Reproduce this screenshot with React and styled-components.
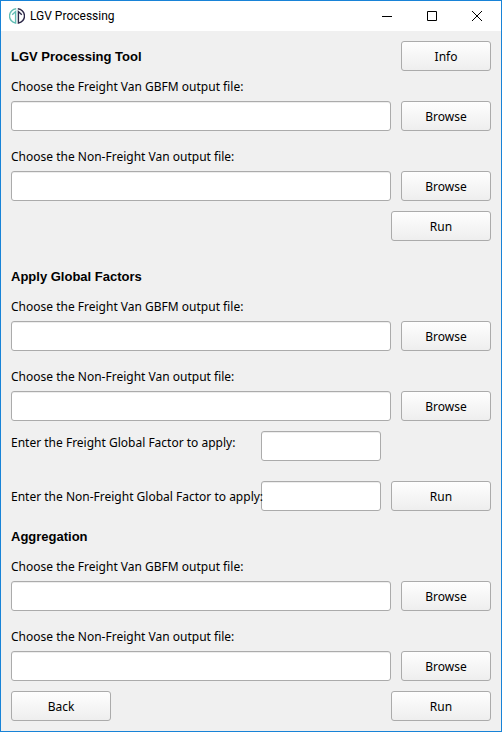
import React, { useId } from "react";
import styled, { createGlobalStyle } from "styled-components";

const GlobalStyle = createGlobalStyle`
  *, *::before, *::after { box-sizing: border-box; }
  body {
    margin: 0;
    background: #f0f0f0;
    color: #000;
    font: 12px/20px "Noto Sans", sans-serif;
  }
`;

const Window = styled.div`
  display: flex;
  flex-direction: column;
  min-height: 100vh;
  border: 1px solid #1883d7;
  background: #f0f0f0;
`;

const TitleBar = styled.header`
  display: flex;
  align-items: center;
  height: 30px;
  padding: 0 2px 0 8px;
  background: #fff;
`;

const Title = styled.h1`
  flex: 1;
  margin: 0;
  padding-left: 5px;
  font: 12px/20px Roboto, sans-serif;
`;

const CaptionButton = styled.button`
  display: grid;
  place-items: center;
  width: 45px;
  height: 30px;
  padding: 0;
  border: 0;
  background: transparent;
`;

const Content = styled.main`
  display: flex;
  flex-direction: column;
  padding: 10px;
`;

const Section = styled.section`
  margin-bottom: ${(p) => p.$gap || 0}px;
`;

const HeadingRow = styled.div`
  display: flex;
  justify-content: space-between;
  height: 30px;
`;

const Heading = styled.h2`
  margin: 0;
  font: bold 13px/32px "Liberation Sans", sans-serif;
`;

const FileGroup = styled.div`
  margin-bottom: 10px;
`;

const FileLabel = styled.label`
  display: block;
  height: 30px;
  line-height: 32px;
`;

const FileRow = styled.div`
  display: flex;
  gap: 10px;
`;

const TextBox = styled.input`
  flex: 1;
  min-width: 0;
  height: 30px;
  padding: 0 6px;
  border: 1px solid #ababab;
  border-radius: 3px;
  background: #fff;
  box-shadow: inset 0 1px 0 #ededed;
  font: inherit;
`;

const Button = styled.button`
  flex: none;
  width: ${(p) => (p.$wide ? 100 : 90)}px;
  height: 30px;
  padding: 2px 0 0;
  border: 1px solid #ababab;
  border-radius: 3px;
  background: linear-gradient(#fefefe, #eeeeee);
  color: #000;
  font: inherit;
`;

const ActionRow = styled.div`
  display: flex;
  justify-content: space-between;
`;

const RunButton = styled(Button)`
  margin-left: auto;
`;

const FactorGrid = styled.div`
  display: grid;
  grid-template-columns: 240px minmax(0, 1fr) 100px;
  column-gap: 10px;
  row-gap: 20px;
`;

const FactorLabel = styled.label`
  z-index: 1;
  padding-top: 2px;
  align-self: ${(p) => p.$align};
  white-space: nowrap;
`;

const FactorBox = styled(TextBox)`
  grid-column: 2;
`;

function Logo() {
  return (
    <svg width="16" height="16" viewBox="0 0 16 16" fill="none" strokeWidth="1.4" aria-hidden="true">
      <path d="M7.2.8A7.2 7.2 0 0 0 6.6 15.1V3.6L3.2 6.8" stroke="#62bdb4" />
      <path d="M8.8.8A7.2 7.2 0 0 1 9.4 15.1V3.6l3.4 3.2" stroke="#2b2847" />
    </svg>
  );
}

function Caption({ label, path }) {
  return (
    <CaptionButton type="button" aria-label={label}>
      <svg width="10" height="10" viewBox="0 0 10 10" fill="none" stroke="#000" aria-hidden="true">
        <path d={path} />
      </svg>
    </CaptionButton>
  );
}

function FileField({ label }) {
  const id = useId();
  return (
    <FileGroup>
      <FileLabel htmlFor={id}>{label}</FileLabel>
      <FileRow>
        <TextBox id={id} type="text" />
        <Button type="button">Browse</Button>
      </FileRow>
    </FileGroup>
  );
}

function FileFields() {
  return (
    <>
      <FileField label="Choose the Freight Van GBFM output file:" />
      <FileField label="Choose the Non-Freight Van output file:" />
    </>
  );
}

export default function App() {
  return (
    <>
      <GlobalStyle />
      <Window>
        <TitleBar>
          <Logo />
          <Title>LGV Processing</Title>
          <Caption label="Minimize" path="M0 5.5h10" />
          <Caption label="Maximize" path="M.5.5h9v9h-9z" />
          <Caption label="Close" path="M0 0l10 10M10 0L0 10" />
        </TitleBar>
        <Content>
          <Section $gap={20}>
            <HeadingRow>
              <Heading>LGV Processing Tool</Heading>
              <Button type="button">Info</Button>
            </HeadingRow>
            <FileFields />
            <ActionRow>
              <RunButton type="button" $wide>Run</RunButton>
            </ActionRow>
          </Section>
          <Section $gap={10}>
            <HeadingRow>
              <Heading>Apply Global Factors</Heading>
            </HeadingRow>
            <FileFields />
            <FactorGrid>
              <FactorLabel htmlFor="freight-factor" $align="start">
                Enter the Freight Global Factor to apply:
              </FactorLabel>
              <FactorBox id="freight-factor" type="text" />
              <span />
              <FactorLabel htmlFor="non-freight-factor" $align="center">
                Enter the Non-Freight Global Factor to apply:
              </FactorLabel>
              <FactorBox id="non-freight-factor" type="text" />
              <Button type="button" $wide>Run</Button>
            </FactorGrid>
          </Section>
          <Section>
            <HeadingRow>
              <Heading>Aggregation</Heading>
            </HeadingRow>
            <FileFields />
            <ActionRow>
              <Button type="button" $wide>Back</Button>
              <Button type="button" $wide>Run</Button>
            </ActionRow>
          </Section>
        </Content>
      </Window>
    </>
  );
}
